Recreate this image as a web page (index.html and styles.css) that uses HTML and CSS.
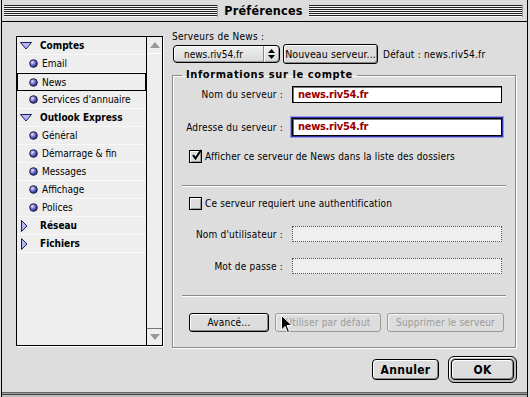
FILE: index.html
```html
<!DOCTYPE html>
<html lang="fr">
<head>
<meta charset="utf-8">
<title>Préférences</title>
<link rel="stylesheet" href="styles.css">
</head>
<body>
<div class="win">
  <div class="titlebar">
    <span class="stripes"></span>
    <span class="title">Préférences</span>
    <span class="stripes"></span>
  </div>
  <div class="content">
    <div class="main">
      <div class="list">
        <div class="rows">
          <div class="row parent"><svg class="tri" width="12" height="8" viewBox="0 0 12 8"><polygon points="0.5,0.5 11.5,0.5 6,7" fill="#b8b8f0" stroke="#1a1a66"/></svg><span>Comptes</span></div>
          <div class="row child"><svg class="dot" width="9" height="9" viewBox="0 0 9 9"><circle cx="4.5" cy="4.5" r="3.8" fill="url(#g)" stroke="#1a1a44"/><defs><radialGradient id="g" cx="0.35" cy="0.35" r="0.7"><stop offset="0" stop-color="#e8e8ff"/><stop offset="0.5" stop-color="#7070d0"/><stop offset="1" stop-color="#202080"/></radialGradient></defs></svg><span>Email</span></div>
          <div class="row child selected"><svg class="dot" width="9" height="9" viewBox="0 0 9 9"><circle cx="4.5" cy="4.5" r="3.8" fill="url(#g)" stroke="#1a1a44"/></svg><span>News</span></div>
          <div class="row child"><svg class="dot" width="9" height="9" viewBox="0 0 9 9"><circle cx="4.5" cy="4.5" r="3.8" fill="url(#g)" stroke="#1a1a44"/></svg><span>Services d'annuaire</span></div>
          <div class="row parent"><svg class="tri" width="12" height="8" viewBox="0 0 12 8"><polygon points="0.5,0.5 11.5,0.5 6,7" fill="#b8b8f0" stroke="#1a1a66"/></svg><span>Outlook Express</span></div>
          <div class="row child"><svg class="dot" width="9" height="9" viewBox="0 0 9 9"><circle cx="4.5" cy="4.5" r="3.8" fill="url(#g)" stroke="#1a1a44"/></svg><span>Général</span></div>
          <div class="row child"><svg class="dot" width="9" height="9" viewBox="0 0 9 9"><circle cx="4.5" cy="4.5" r="3.8" fill="url(#g)" stroke="#1a1a44"/></svg><span>Démarrage &amp; fin</span></div>
          <div class="row child"><svg class="dot" width="9" height="9" viewBox="0 0 9 9"><circle cx="4.5" cy="4.5" r="3.8" fill="url(#g)" stroke="#1a1a44"/></svg><span>Messages</span></div>
          <div class="row child"><svg class="dot" width="9" height="9" viewBox="0 0 9 9"><circle cx="4.5" cy="4.5" r="3.8" fill="url(#g)" stroke="#1a1a44"/></svg><span>Affichage</span></div>
          <div class="row child"><svg class="dot" width="9" height="9" viewBox="0 0 9 9"><circle cx="4.5" cy="4.5" r="3.8" fill="url(#g)" stroke="#1a1a44"/></svg><span>Polices</span></div>
          <div class="row parent closed"><svg class="tri" width="12" height="12" viewBox="0 0 12 12"><polygon points="1.5,0.5 7,6 1.5,11.5" fill="#b8b8f0" stroke="#1a1a66"/></svg><span>Réseau</span></div>
          <div class="row parent closed"><svg class="tri" width="12" height="12" viewBox="0 0 12 12"><polygon points="1.5,0.5 7,6 1.5,11.5" fill="#b8b8f0" stroke="#1a1a66"/></svg><span>Fichiers</span></div>
        </div>
        <div class="scrollbar">
          <div class="arrow up"><svg width="10" height="6" viewBox="0 0 10 6"><polygon points="5,0 10,6 0,6" fill="#999"/></svg></div>
          <div class="track"></div>
          <div class="arrow down"><svg width="10" height="6" viewBox="0 0 10 6"><polygon points="0,0 10,0 5,6" fill="#999"/></svg></div>
        </div>
      </div>

      <div class="right">
        <div class="caption">Serveurs de News :</div>
        <div class="toprow">
          <div class="popup"><span class="ptext">news.riv54.fr</span><span class="parrow"><svg width="7" height="10" viewBox="0 0 7 10"><polygon points="3.5,0 7,4 0,4" fill="#000"/><polygon points="0,6 7,6 3.5,10" fill="#000"/></svg></span></div>
          <div class="btn newbtn">Nouveau serveur...</div>
          <div class="default">Défaut : news.riv54.fr</div>
        </div>

        <fieldset class="group">
          <legend>Informations sur le compte</legend>
          <div class="frow r1"><span class="lbl">Nom du serveur :</span><span class="field">news.riv54.fr</span></div>
          <div class="frow r2"><span class="lbl">Adresse du serveur :</span><span class="field focus">news.riv54.fr</span></div>
          <div class="crow c1"><span class="cb"><svg width="13" height="13" viewBox="0 0 13 13"><path d="M3 6 L5.5 9.5 L11 1" fill="none" stroke="#000" stroke-width="2"/></svg></span><span>Afficher ce serveur de News dans la liste des dossiers</span></div>
          <div class="sep s1"></div>
          <div class="crow c2"><span class="cb"></span><span>Ce serveur requiert une authentification</span></div>
          <div class="frow r3"><span class="lbl">Nom d'utilisateur :</span><span class="field off"></span></div>
          <div class="frow r4"><span class="lbl">Mot de passe :</span><span class="field off"></span></div>
          <div class="sep s2"></div>
          <div class="brow">
            <div class="btn sm b1">Avancé...</div>
            <div class="btn sm b2 dis">Utiliser par défaut</div>
            <div class="btn sm b3 dis">Supprimer le serveur</div>
            <svg class="cursor" width="12" height="19" viewBox="0 0 12 19"><path d="M0.5 0.5 L0.5 15 L4 11.5 L6.5 17.5 L8.5 16.5 L6 10.5 L11 10.5 Z" fill="#000" stroke="#fff"/></svg>
          </div>
        </fieldset>
      </div>
    </div>
    <div class="footer">
      <div class="btn big cancel">Annuler</div>
      <div class="okring"><div class="btn big ok">OK</div></div>
    </div>
  </div>
  <div class="frame-bottom"></div>
</div>
</body>
</html>
```

FILE: styles.css
```css
html, body {
  margin: 0;
  padding: 0;
  width: 530px;
  height: 397px;
  background: #dcdcdc;
  overflow: hidden;
}
body {
  font-family: "DejaVu Sans Condensed", "DejaVu Sans", sans-serif;
  font-size: 10px;
  color: #000;
}
.win {
  width: 527px;
  height: 397px;
  margin-left: 1px;
  box-sizing: border-box;
  border-left: 1px solid #000;
  border-right: 1px solid #000;
  display: flex;
  flex-direction: column;
  background: #dddddd;
}
.titlebar {
  flex: 0 0 auto;
  height: 22px;
  box-sizing: border-box;
  border-bottom: 1px solid #000;
  display: flex;
  align-items: center;
  padding: 0 4px 0 2px;
  gap: 6px;
  background: #dcdcdc;
}
.stripes {
  flex: 1;
  height: 12px;
  background: repeating-linear-gradient(to bottom, #222 0 1px, #f4f4f4 1px 2px);
  border-right: 1px solid #999;
}
.title {
  font-weight: bold;
  font-size: 12.5px;
  letter-spacing: 0.2px;
}
.content {
  flex: 1 1 auto;
  min-height: 0;
  overflow: hidden;
  display: flex;
  flex-direction: column;
}
.main {
  flex: 0 0 auto;
  display: flex;
  align-items: flex-start;
  padding: 8px 0 0 14px;
}
.list {
  flex: 0 0 auto;
  width: 147px;
  height: 310px;
  margin-top: 6px;
  box-sizing: border-box;
  border: 1px solid #000;
  background: #eeeeee;
  display: flex;
  box-shadow: 1px 1px 0 #fff;
}
.rows {
  flex: 1;
  display: flex;
  flex-direction: column;
}
.row {
  flex: 0 0 18px;
  height: 18px;
  box-sizing: border-box;
  border-bottom: 1px solid #f8f8f8;
  display: flex;
  align-items: center;
}
.row.parent {
  font-weight: bold;
  padding-left: 3px;
}
.row.parent .tri { margin-right: 8px; }
.row.child {
  padding-left: 12px;
}
.row.child .dot { margin-right: 4px; }
.row.selected {
  border: 1px solid #000;
  padding-left: 11px;
}
.scrollbar {
  width: 15px;
  border-left: 1px solid #000;
  display: flex;
  flex-direction: column;
  background: #eeeeee;
}
.arrow {
  flex: 0 0 16px;
  height: 16px;
  display: flex;
  align-items: center;
  justify-content: center;
}
.arrow.up { border-bottom: 1px solid #fff; }
.arrow.down { border-top: 1px solid #777; }
.track { flex: 1; }

.right {
  width: 344px;
  margin-left: 9px;
  display: flex;
  flex-direction: column;
}
.right > * { flex-shrink: 0; }
.caption {
  margin-top: 1px;
  line-height: 12px;
  letter-spacing: 0.3px;
}
.toprow {
  display: flex;
  align-items: center;
  margin-top: 1px;
  height: 20px;
  white-space: nowrap;
}
.popup {
  width: 107px;
  height: 18px;
  box-sizing: border-box;
  border: 1px solid #000;
  border-radius: 4px;
  background: linear-gradient(#f0f0f0, #d8d8d8);
  box-shadow: inset 1px 1px 0 #fff, inset -1px -1px 0 #999;
  display: flex;
  align-items: center;
  margin-left: 1px;
}
.ptext {
  flex: 1;
  padding-left: 10px;
}
.parrow {
  width: 15px;
  height: 16px;
  border-left: 1px solid #888;
  box-shadow: inset 1px 0 0 #fff;
  display: flex;
  align-items: center;
  justify-content: center;
}
.btn {
  box-sizing: border-box;
  border: 1px solid #000;
  border-radius: 3px;
  background: #dddddd;
  box-shadow: inset 1px 1px 0 #fff, inset -1px -1px 0 #888;
  display: flex;
  align-items: center;
  justify-content: center;
  white-space: nowrap;
  flex-shrink: 0;
}
.newbtn {
  width: 95px;
  height: 20px;
  margin-left: 3px;
  font-size: 10.5px;
  letter-spacing: 0.1px;
}
.default {
  margin-left: 5px;
  letter-spacing: 0.2px;
}
.group {
  margin: 5px 0 0 0;
  padding: 0;
  width: 344px;
  height: 279px;
  box-sizing: border-box;
  border: 1px solid #8a8a8a;
  box-shadow: inset 1px 1px 0 #fff, 1px 1px 0 #fff;
  display: flex;
  flex-direction: column;
  min-width: 0;
}
.group > * { flex-shrink: 0; }
.group legend {
  font-weight: bold;
  font-size: 11px;
  letter-spacing: 0.6px;
  margin-left: 9px;
  padding: 0 4px;
  line-height: 12px;
}
.frow {
  display: flex;
  align-items: center;
}
.lbl {
  width: 110px;
  text-align: right;
  letter-spacing: 0.2px;
}
.field {
  width: 210px;
  height: 17px;
  box-sizing: border-box;
  margin-left: 9px;
  border: 1px solid #000;
  background: #fff;
  box-shadow: inset 1px 1px 0 #777;
  color: #9a0000;
  font-weight: bold;
  font-size: 11px;
  padding-left: 5px;
  line-height: 15px;
  letter-spacing: -0.3px;
}
.field.focus {
  height: 18px;
  box-shadow: 0 0 0 1px #3030a8, 0 0 0 2px #9a9ae0, inset 1px 1px 0 #777;
}
.field.off {
  background: #efefef;
  border: 1px dotted #555;
  box-shadow: none;
  height: 16px;
}
.r1 { margin-top: 5px; }
.r2 { margin-top: 15px; }
.crow {
  display: flex;
  align-items: center;
  margin-left: 16px;
  letter-spacing: 0.15px;
}
.cb {
  width: 13px;
  height: 13px;
  box-sizing: border-box;
  border: 1px solid #000;
  background: #dcdcdc;
  box-shadow: inset 1px 1px 0 #fff, inset -1px -1px 0 #999;
  margin-right: 3px;
  position: relative;
}
.cb svg {
  position: absolute;
  left: 0;
  top: -2px;
}
.c1 { margin-top: 14px; }
.sep {
  height: 1px;
  background: #8a8a8a;
  border-bottom: 1px solid #fff;
  margin-left: 9px;
  margin-right: 9px;
}
.s1 { margin-top: 22px; }
.c2 { margin-top: 10px; }
.r3 { margin-top: 16px; }
.r4 { margin-top: 16px; }
.s2 { margin-top: 21px; }
.brow {
  display: flex;
  margin-top: 16px;
  margin-left: 16px;
  gap: 6px;
  position: relative;
}
.btn.sm {
  height: 19px;
  letter-spacing: 0.2px;
}
.b1 { width: 80px; }
.b2 { width: 106px; }
.b3 { width: 117px; }
.btn.dis {
  color: #9a9a9a;
  border-color: #999;
  box-shadow: inset 1px 1px 0 #f4f4f4;
}
.cursor {
  position: absolute;
  left: 92px;
  top: 2px;
}
.footer {
  flex: 0 0 auto;
  display: flex;
  justify-content: flex-end;
  align-items: center;
  padding: 8px 10px 0 0;
  gap: 9px;
}
.btn.big {
  font-weight: bold;
  font-size: 12px;
  letter-spacing: 0.3px;
  height: 21px;
  border-radius: 4px;
}
.cancel { width: 67px; }
.okring {
  width: 69px;
  height: 27px;
  box-sizing: border-box;
  border: 1px solid #000;
  border-radius: 6px;
  padding: 2px;
  background: #bbb;
  box-shadow: inset 1px 1px 0 #fff;
}
.ok { width: 100%; height: 100%; }
.frame-bottom {
  flex: 0 0 6px;
  height: 6px;
  background: linear-gradient(to bottom, #dddddd 0 1px, #666 1px 2px, #999 2px 3px, #444 3px 4px, #bbb 4px 6px);
}
```
